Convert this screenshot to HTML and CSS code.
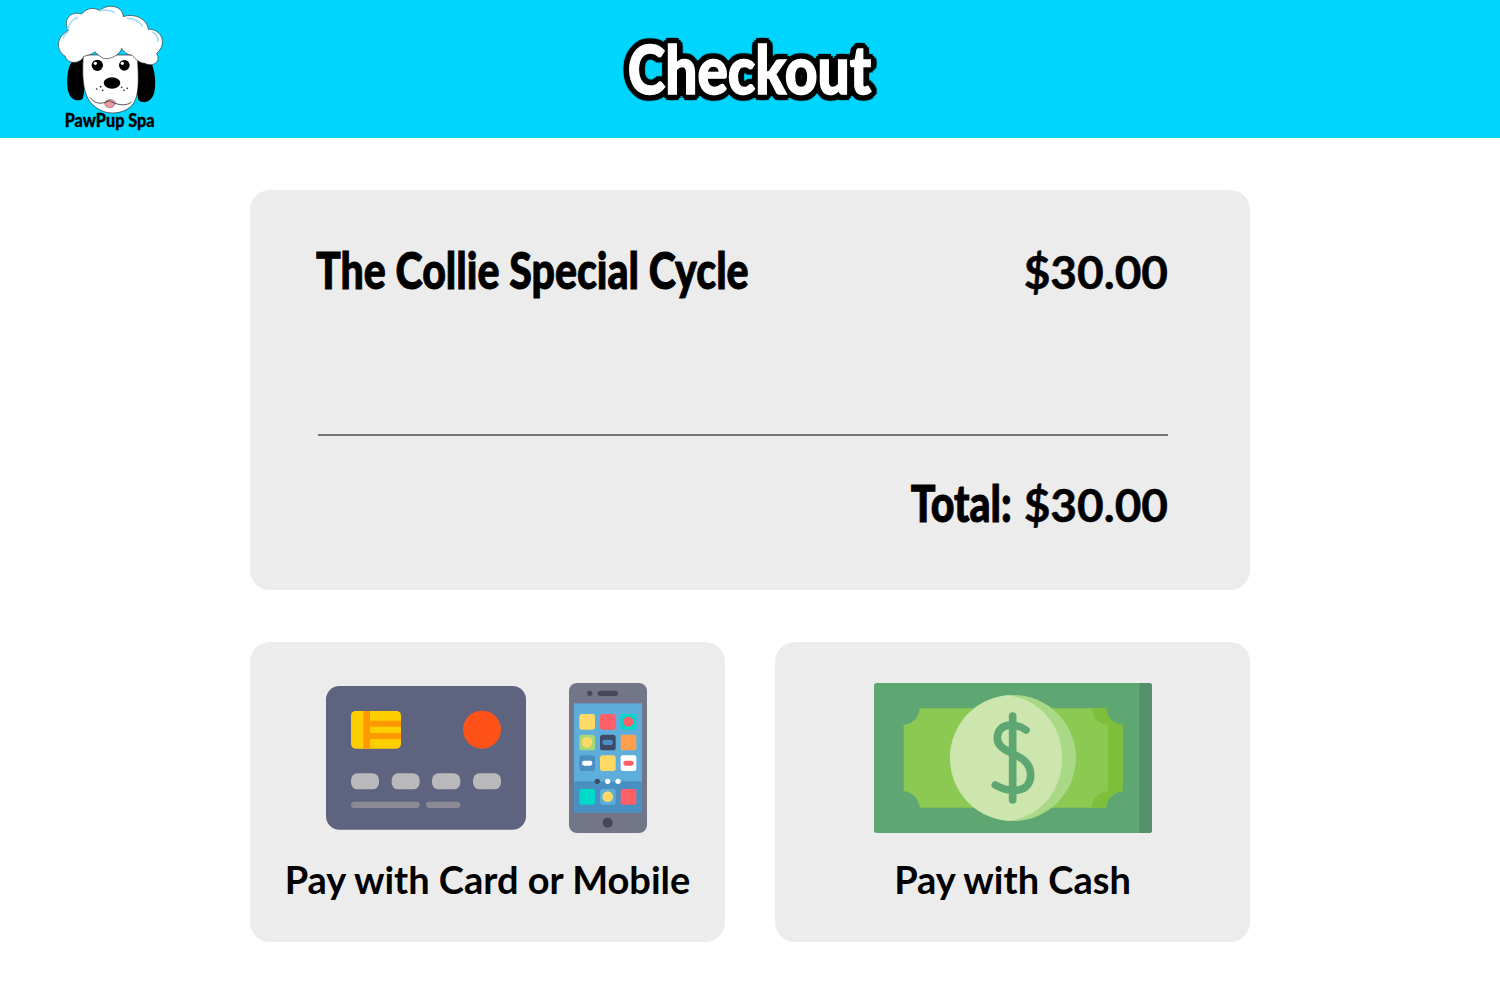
FILE: index.html
```html
<!DOCTYPE html>
<html lang="en">
<head>
    <meta charset="UTF-8">
    <title>Checkout</title>
    <link rel="stylesheet" href="styles.css">
</head>
<body>

    <header class="topbar">
        <svg class="logo" viewBox="0 0 420 420" width="140" height="140">
            <path d="M105 178 C80 190 78 250 85 275 C92 300 112 306 128 296 C140 250 140 200 130 175 Z" fill="#000"/>
            <path d="M320 172 C345 190 350 250 342 280 C335 305 312 314 295 300 C285 250 285 200 295 170 Z" fill="#000"/>
            <path d="M130 165 C125 240 130 295 165 320 C195 345 240 345 270 322 C300 298 296 240 292 165 Z" fill="#fff" stroke="#222" stroke-width="2"/>
            <path d="M75 168 C45 150 50 108 85 92 C68 60 90 32 125 42 C140 22 165 22 180 32 C200 10 248 15 250 50 C285 38 322 58 325 88 C362 85 385 130 350 160 C365 188 335 202 315 190 C298 190 285 175 275 165 C262 165 250 155 245 145 C240 165 210 180 190 175 C180 170 170 160 165 155 C155 165 140 165 130 170 C125 188 85 198 75 168 Z" fill="#fff" stroke="#333" stroke-width="2"/>
            <path d="M85 90 C85 70 100 55 115 52 M180 32 C195 28 215 32 225 38 M260 55 C285 55 300 65 308 80 M335 95 C348 100 355 115 355 125 M68 115 C72 105 78 100 85 95" fill="none" stroke="#a8dcf5" stroke-width="5"/>
            <circle cx="172" cy="196" r="17" fill="#000"/>
            <circle cx="253" cy="196" r="16" fill="#000"/>
            <circle cx="166" cy="190" r="5" fill="#fff"/>
            <circle cx="247" cy="190" r="5" fill="#fff"/>
            <ellipse cx="216" cy="249" rx="25" ry="17" fill="#000"/>
            <g fill="#222">
                <circle cx="170" cy="267" r="2.5"/>
                <circle cx="182" cy="260" r="2.5"/>
                <circle cx="188" cy="271" r="2.5"/>
                <circle cx="245" cy="262" r="2.5"/>
                <circle cx="252" cy="271" r="2.5"/>
                <circle cx="262" cy="265" r="2.5"/>
            </g>
            <path d="M194 306 C192 328 225 330 226 306 C216 296 204 296 194 306 Z" fill="#eb9aa6" stroke="#555" stroke-width="1.5"/>
            <path d="M150 292 C165 315 190 312 208 302 C225 312 255 322 275 306" fill="none" stroke="#333" stroke-width="2.5"/>
            <text class="logo-text" x="74" y="380" textLength="270" lengthAdjust="spacingAndGlyphs">PawPup Spa</text>
        </svg>
        <h1 class="page-title">Checkout</h1>
    </header>

    <main class="checkout">
        <section class="summary">
            <div class="line-item">
                <span class="item-name">The Collie Special Cycle</span>
                <span class="price">$30.00</span>
            </div>
            <div class="divider"></div>
            <div class="total"><span class="item-name total-name">Total:</span><span class="price">$30.00</span></div>
        </section>

        <div class="pay-options">
            <div class="pay-card">
                <div class="pay-icons card-icons">
                    <svg viewBox="48 39 600 450" width="200" height="150">
                        <rect x="48" y="48" width="600" height="431" rx="40" fill="#5e647f"/>
                        <rect x="123" y="123" width="150" height="113" rx="14" fill="#ffce00"/>
                        <path d="M160 123 H180 V152 H273 V170 H180 V189 H273 V207 H180 V236 H160 Z" fill="#ff9800"/>
                        <circle cx="516" cy="179" r="57" fill="#ff5219"/>
                        <g fill="#b9b9bc">
                            <rect x="123" y="310" width="84" height="48" rx="20"/>
                            <rect x="245" y="310" width="84" height="48" rx="20"/>
                            <rect x="366" y="310" width="85" height="48" rx="20"/>
                            <rect x="489" y="310" width="84" height="48" rx="20"/>
                        </g>
                        <g fill="#8b8a94">
                            <rect x="123" y="395" width="206" height="19" rx="9"/>
                            <rect x="348" y="395" width="103" height="19" rx="9"/>
                        </g>
                    </svg>
                    <svg viewBox="777 39 234 450" width="78" height="150">
                        <rect x="777" y="39" width="234" height="450" rx="24" fill="#737588"/>
                        <circle cx="839" cy="70" r="8" fill="#474757"/>
                        <rect x="863" y="62" width="61" height="16" rx="8" fill="#474757"/>
                        <rect x="792" y="100" width="204" height="328" fill="#5eaedb"/>
                        <rect x="792" y="334" width="204" height="94" fill="#4a8fc2"/>
                        <rect x="808" y="132" width="47" height="47" rx="8" fill="#ffd966"/>
                        <rect x="870" y="132" width="47" height="47" rx="8" fill="#ff5f66"/>
                        <rect x="932" y="132" width="47" height="47" rx="6" fill="#00d9c7"/>
                        <circle cx="955" cy="155" r="15" fill="#ff5f66"/>
                        <rect x="808" y="194" width="47" height="47" rx="8" fill="#a5d878"/>
                        <circle cx="831" cy="217" r="16" fill="#ffd966"/>
                        <rect x="870" y="194" width="47" height="47" rx="8" fill="#3f4a66"/>
                        <rect x="877" y="209" width="32" height="16" rx="8" fill="#4a8fc2"/>
                        <rect x="932" y="194" width="47" height="47" rx="6" fill="#ff9f4f"/>
                        <rect x="808" y="256" width="47" height="47" rx="8" fill="#4a8fc2"/>
                        <rect x="816" y="272" width="31" height="15" rx="7" fill="#fff"/>
                        <rect x="870" y="256" width="47" height="47" rx="8" fill="#ffd966"/>
                        <rect x="932" y="256" width="47" height="47" rx="6" fill="#fff"/>
                        <rect x="940" y="272" width="31" height="15" rx="7" fill="#ff5f66"/>
                        <circle cx="862" cy="334" r="8" fill="#3f4a66"/>
                        <circle cx="893" cy="334" r="8" fill="#fff"/>
                        <circle cx="924" cy="334" r="8" fill="#fff"/>
                        <rect x="808" y="357" width="47" height="47" rx="6" fill="#00d9c7"/>
                        <rect x="870" y="357" width="47" height="47" rx="8" fill="#5eaedb"/>
                        <circle cx="893" cy="380" r="16" fill="#ffd966"/>
                        <rect x="932" y="357" width="47" height="47" rx="6" fill="#ff5f66"/>
                        <circle cx="893" cy="458" r="15" fill="#474757"/>
                    </svg>
                </div>
                <p class="pay-label">Pay with Card or Mobile</p>
            </div>
            <div class="pay-card">
                <div class="pay-icons">
                    <svg viewBox="42 39 834 450" width="278" height="150">
                        <rect x="42" y="39" width="834" height="450" rx="8" fill="#5fa772"/>
                        <path d="M838 39 H868 Q876 39 876 47 V481 Q876 489 868 489 H838 Z" fill="#54906a"/>
                        <path d="M180 115 H738 Q745 160 788 165 V363 Q745 370 738 413 H180 Q172 370 131 363 V165 Q172 160 180 115 Z" fill="#8bc952"/>
                        <path d="M695 115 H738 Q745 160 788 165 V363 Q745 370 738 413 H695 Q700 370 744 363 V165 Q700 160 695 115 Z" fill="#7dbe3a"/>
                        <circle cx="459" cy="264" r="189" fill="#a9d987"/>
                        <path d="M445 75.5 A189 189 0 0 0 445 452.5 C545 440 606 360 606 264 C606 170 545 90 445 75.5 Z" fill="#cce6ae"/>
                        <path d="M458 138 V390 M498 180 C470 160 412 155 412 205 C412 255 512 245 512 315 C512 370 450 370 406 345" fill="none" stroke="#5fa772" stroke-width="23" stroke-linecap="round"/>
                    </svg>
                </div>
                <p class="pay-label">Pay with Cash</p>
            </div>
        </div>
    </main>

</body>
</html>
```

FILE: styles.css
```css
body {
    margin: 0;
    background: white;
    color: black;
    font-family: Lato, sans-serif;
}
.topbar {
    display: grid;
    grid-template-columns: 1fr auto 1fr;
    align-items: center;
    height: 138px;
    padding-left: 40px;
    padding-right: 40px;
    background-color: #00d5ff;
}
.logo {
    display: block;
}
.logo-text {
    font-family: Lato, sans-serif;
    font-size: 56px;
    font-weight: 900;
    fill: black;
    stroke: black;
    stroke-width: 1px;
}
.page-title {
    margin: 0 0 4px;
    font-size: 66px;
    font-weight: 900;
    color: white;
    -webkit-text-stroke: 1.5px white;
    transform: scaleX(0.86);
    /* ring of shadows, text-stroke gives sharp corners */
    text-shadow:
        7px 0 1px #000, -7px 0 1px #000, 0 6px 1px #000, 0 -6px 1px #000,
        5px 4px 1px #000, -5px 4px 1px #000, 5px -4px 1px #000, -5px -4px 1px #000,
        7px 2px 1px #000, -7px 2px 1px #000, 7px -2px 1px #000, -7px -2px 1px #000,
        3px 6px 1px #000, -3px 6px 1px #000, 3px -6px 1px #000, -3px -6px 1px #000;
}
.checkout {
    width: 1000px;
    margin: 52px auto 0;
}
.summary {
    height: 400px;
    box-sizing: border-box;
    padding: 48px 82px 0 66px;
    background-color: #ececec;
    border-radius: 20px;
}
.line-item {
    display: flex;
    justify-content: space-between;
    align-items: baseline;
    height: 60px;
}
.item-name {
    display: inline-block;
    font-size: 52px;
    font-weight: 900;
    -webkit-text-stroke: 1px black;
    transform: scaleX(0.79);
    transform-origin: left;
}
.total-name {
    margin-right: 12px;
    transform-origin: right;
}
.price {
    font-size: 46px;
    font-weight: 700;
    -webkit-text-stroke: 0.5px black;
}
.divider {
    height: 2px;
    margin: 136px 0 0 2px;
    background-color: #777;
}
.total {
    margin-top: 36px;
    text-align: right;
    line-height: 60px;
}
.pay-options {
    display: grid;
    grid-template-columns: 475px 475px;
    gap: 50px;
    margin-top: 52px;
}
.pay-card {
    height: 300px;
    box-sizing: border-box;
    padding-top: 41px;
    background-color: #ececec;
    border-radius: 20px;
    text-align: center;
}
.pay-icons {
    display: flex;
    justify-content: center;
    height: 150px;
}
.card-icons {
    gap: 43px;
    padding-right: 2px;
}
.pay-label {
    margin: 24px 0 0;
    font-size: 38px;
    font-weight: 700;
    line-height: 44px;
}
```
